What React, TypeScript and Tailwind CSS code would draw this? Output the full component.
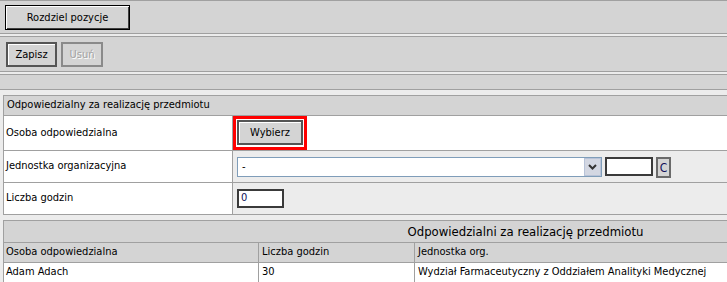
import React from 'react';

// App.tsx - responsible person form (legacy admin screen)
const btnBase = 'block h-[25px] bg-[#d4d4d4] p-0 text-center text-[11px]';

const Bar: React.FC<{ className?: string; children?: React.ReactNode }> = ({
  className,
  children,
}) => (
  <div className={`border-y border-[#a0a0a0] bg-[#d4d4d4] ${className || ''}`}>
    {children}
  </div>
);

export default function App() {
  return (
    <div className="h-[282px] w-[727px] overflow-hidden bg-[#ececec] font-['DejaVu_Sans_Condensed','Liberation_Sans',sans-serif] text-[11px] text-black">
      {/* top action bars */}
      <Bar className="h-[34px] pt-[4px] pl-[5px]">
        <button
          className={`${btnBase} w-[125px] leading-[23px] border border-black shadow-[inset_1px_1px_0_#ffffff,inset_-1px_-1px_0_#404040]`}
        >
          <span className="block w-full text-center">Rozdziel pozycje</span>
        </button>
      </Bar>
      <Bar className="mt-[2px] h-[36px] pt-[5px] pl-[6px] flex items-start gap-[4px]">
        <button
          className={`${btnBase} w-[51px] leading-[21px] border-2 border-[#555555] shadow-[inset_1px_1px_0_#ffffff]`}
        >
          Zapisz
        </button>
        <button
          className={`${btnBase} w-[42px] leading-[21px] border-2 border-[#8a8a8a] text-[#a3a3a3] [text-shadow:1px_1px_0_#ffffff]`}
        >
          Usuń
        </button>
      </Bar>
      <Bar className="mt-[2px] h-[16px]" />

      {/* edit form */}
      <div className="mt-[5px] ml-[3px] w-[1044px] border-l border-t border-[#a0a0a0]">
        <div className="h-[20px] bg-[#d4d4d4] border-b border-[#a0a0a0] flex items-center pl-[3px]">
          Odpowiedzialny za realizację przedmiotu
        </div>

        <div className="flex h-[35px] border-b border-[#a0a0a0] bg-white">
          <div className="w-[229px] border-r border-[#a0a0a0] flex items-center pl-[2px]">
            Osoba odpowiedzialna
          </div>
          <div className="flex-1">
            <div className="w-[74px] h-[34px] border-[3px] border-[#ff0000] p-[1px]">
              <button
                className={`${btnBase} w-[66px] leading-[21px] border-2 border-[#555555] shadow-[inset_1px_1px_0_#ffffff]`}
              >
                Wybierz
              </button>
            </div>
          </div>
        </div>

        <div className="flex h-[32px] border-b border-[#a0a0a0]">
          <div className="w-[229px] bg-white border-r border-[#a0a0a0] flex items-center pl-[2px]">
            Jednostka organizacyjna
          </div>
          <div className="flex-1 flex items-start pt-[6px] pl-[4px]">
            <div className="w-[365px] h-[20px] border border-[#7f9db9] bg-white flex items-center">
              <span className="flex-1 pl-[4px]">-</span>
              <div className="w-[17px] h-[18px] bg-[#d3d7e2] border border-[#b8c3d8] flex items-center justify-center">
                <svg width="9" height="6" viewBox="0 0 9 6">
                  <path d="M1 1 L4.5 4.5 L8 1" fill="none" stroke="#333" strokeWidth="2" />
                </svg>
              </div>
            </div>
            <div className="ml-[3px] w-[48px] h-[19px] bg-white border-2 border-[#3a3a3a]" />
            <button className="ml-[3px] w-[15px] h-[21px] bg-[#d4d4d4] border-2 border-[#6a6a6a] text-[12px] leading-none text-[#10105a] flex items-center justify-center">
              C
            </button>
          </div>
        </div>

        <div className="flex h-[32px] border-b border-[#a0a0a0]">
          <div className="w-[229px] bg-white border-r border-[#a0a0a0] flex items-center pl-[2px]">
            Liczba godzin
          </div>
          <div className="flex-1 flex items-start pt-[6px] pl-[4px]">
            <div className="w-[47px] h-[19px] bg-white border-2 border-[#3a3a3a] flex items-center pl-[2px] text-[#10105a]">
              0
            </div>
          </div>
        </div>
      </div>

      {/* list of responsible persons */}
      <div className="mt-[5px] ml-[3px] w-[1044px] border-l border-t border-[#a0a0a0]">
        <div className="h-[22px] bg-[#d4d4d4] border-b border-[#a0a0a0] flex items-center justify-center text-[13px]">
          Odpowiedzialni za realizację przedmiotu
        </div>
        <div className="flex h-[20px] bg-[#d4d4d4] border-b border-[#a0a0a0]">
          <div className="w-[255px] border-r border-[#a0a0a0] flex items-center pl-[2px]">
            Osoba odpowiedzialna
          </div>
          <div className="w-[156px] border-r border-[#a0a0a0] flex items-center pl-[3px]">
            Liczba godzin
          </div>
          <div className="flex-1 flex items-center pl-[3px]">Jednostka org.</div>
        </div>
        <div className="flex h-[20px] bg-white border-b border-[#a0a0a0]">
          <div className="w-[255px] border-r border-[#a0a0a0] flex items-center pl-[2px]">
            Adam Adach
          </div>
          <div className="w-[156px] border-r border-[#a0a0a0] flex items-center pl-[3px]">
            30
          </div>
          <div className="flex-1 flex items-center pl-[3px]">
            Wydział Farmaceutyczny z Oddziałem Analityki Medycznej
          </div>
        </div>
      </div>
    </div>
  );
}
